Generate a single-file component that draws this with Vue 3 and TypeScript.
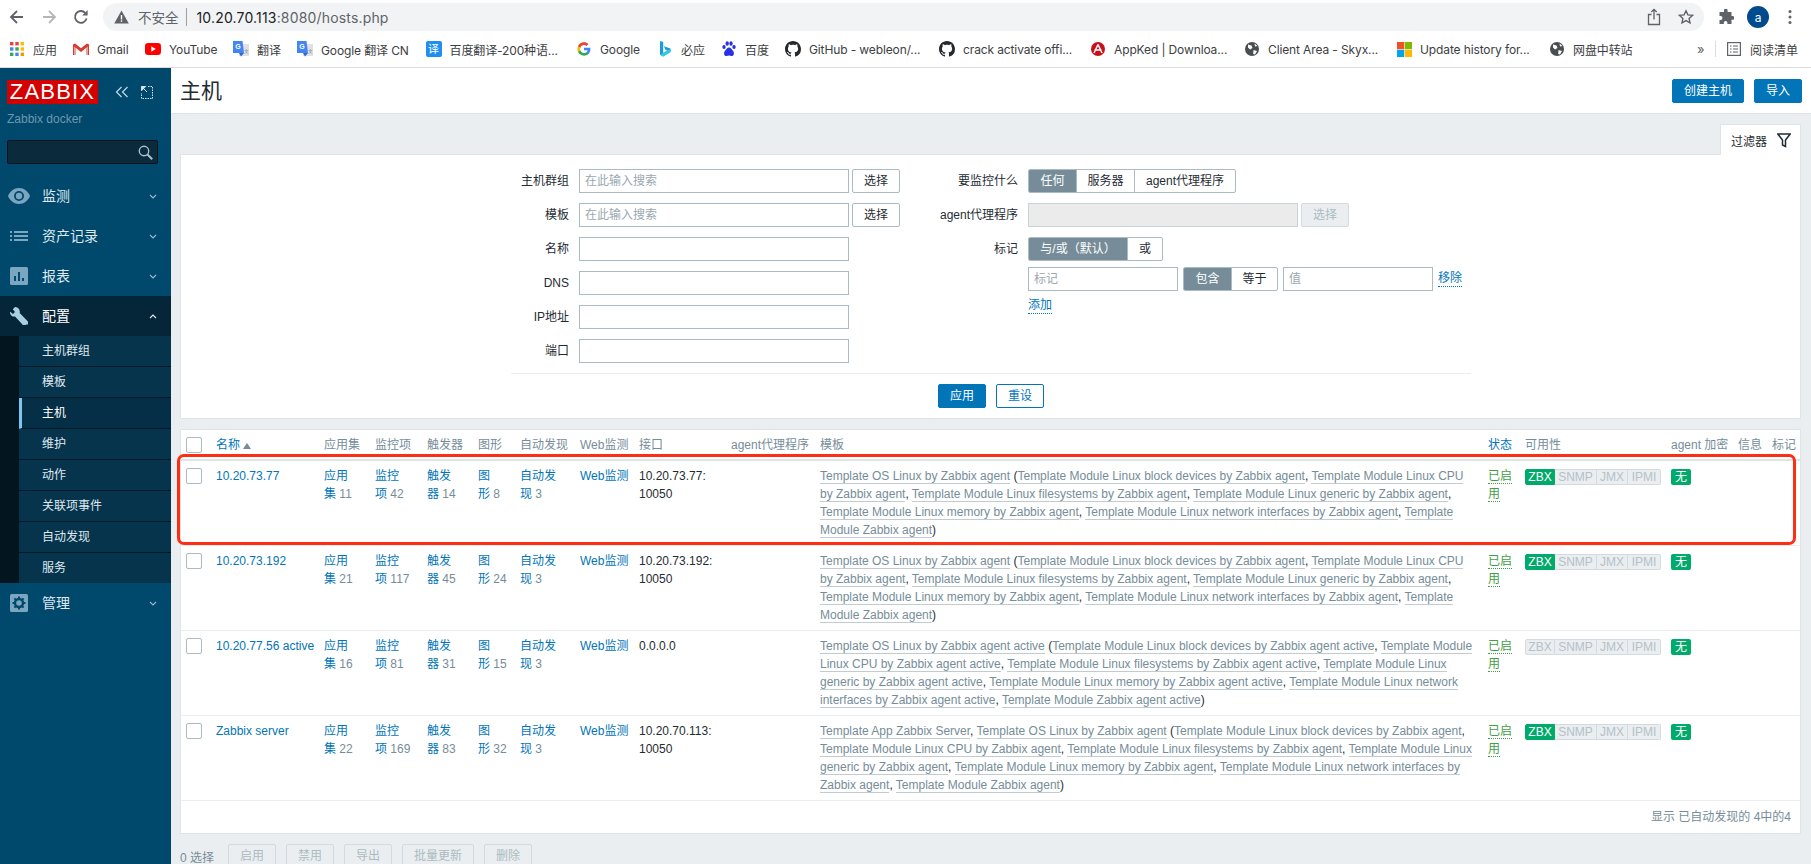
<script setup lang="ts">
interface Bookmark { kind: string; label: string; x: number }
const rawBookmarks: Bookmark[] = [
  { kind: 'apps', label: '应用', x: 9 },
  { kind: 'gmail', label: 'Gmail', x: 73 },
  { kind: 'youtube', label: 'YouTube', x: 145 },
  { kind: 'gt', label: '翻译', x: 233 },
  { kind: 'gt', label: 'Google 翻译 CN', x: 297 },
  { kind: 'bt', label: '百度翻译-200种语...', x: 425.5 },
  { kind: 'google', label: 'Google', x: 576 },
  { kind: 'bing', label: '必应', x: 657 },
  { kind: 'baidu', label: '百度', x: 721 },
  { kind: 'github', label: 'GitHub - webleon/...', x: 785 },
  { kind: 'github', label: 'crack activate offi...', x: 939 },
  { kind: 'appked', label: 'AppKed | Downloa...', x: 1090 },
  { kind: 'globe', label: 'Client Area - Skyx...', x: 1244 },
  { kind: 'ms', label: 'Update history for...', x: 1396 },
  { kind: 'globe', label: '网盘中转站', x: 1549 },
]
const bookmarks = rawBookmarks.map((b, i) => ({
  ...b,
  w: i < rawBookmarks.length - 1 ? rawBookmarks[i + 1].x - b.x : 100,
}))

const subItems = ['主机群组', '模板', '主机', '维护', '动作', '关联项事件', '自动发现', '服务']

const columns = [
  { label: '', w: 30 },
  { label: '名称', w: 108 },
  { label: '应用集', w: 51 },
  { label: '监控项', w: 52 },
  { label: '触发器', w: 51 },
  { label: '图形', w: 42 },
  { label: '自动发现', w: 60 },
  { label: 'Web监测', w: 59 },
  { label: '接口', w: 92 },
  { label: 'agent代理程序', w: 89 },
  { label: '模板', w: 668 },
  { label: '状态', w: 37 },
  { label: '可用性', w: 146 },
  { label: 'agent 加密', w: 67 },
  { label: '信息', w: 34 },
  { label: '标记', w: 33 },
]

const base = (suffix: string) => [
  `Template Module Linux block devices by Zabbix agent${suffix}`,
  `Template Module Linux CPU by Zabbix agent${suffix}`,
  `Template Module Linux filesystems by Zabbix agent${suffix}`,
  `Template Module Linux generic by Zabbix agent${suffix}`,
  `Template Module Linux memory by Zabbix agent${suffix}`,
  `Template Module Linux network interfaces by Zabbix agent${suffix}`,
  `Template Module Zabbix agent${suffix}`,
]

const rows = [
  { name: '10.20.73.77', a: 11, i: 42, t: 14, g: 8, d: 3, iface: '10.20.73.77: 10050', mains: ['Template OS Linux by Zabbix agent'], kids: base(''), zbx: true },
  { name: '10.20.73.192', a: 21, i: 117, t: 45, g: 24, d: 3, iface: '10.20.73.192: 10050', mains: ['Template OS Linux by Zabbix agent'], kids: base(''), zbx: true },
  { name: '10.20.77.56 active', a: 16, i: 81, t: 31, g: 15, d: 3, iface: '0.0.0.0', mains: ['Template OS Linux by Zabbix agent active'], kids: base(' active'), zbx: false },
  { name: 'Zabbix server', a: 22, i: 169, t: 83, g: 32, d: 3, iface: '10.20.70.113: 10050', mains: ['Template App Zabbix Server', 'Template OS Linux by Zabbix agent'], kids: base(''), zbx: true },
]
const actions = ['启用', '禁用', '导出', '批量更新', '删除']
const nbsp = '\u00a0'
</script>

<template>
  <div class="page">
    <header class="toolbar">
      <button class="tool-btn" aria-label="back">
        <svg width="16" height="16" viewBox="0 0 16 16" fill="none" stroke="#5f6368" stroke-width="1.8"><path d="M14 8H2.5M8 2 2 8l6 6" /></svg>
      </button>
      <button class="tool-btn" aria-label="forward">
        <svg width="16" height="16" viewBox="0 0 16 16" fill="none" stroke="#b4b7ba" stroke-width="1.8"><path d="M2 8h11.5M8 2l6 6-6 6" /></svg>
      </button>
      <button class="tool-btn" aria-label="reload">
        <svg width="16" height="16" viewBox="0 0 16 16" fill="none" stroke="#5f6368" stroke-width="1.8"><path d="M13.6 9.6A5.9 5.9 0 1 1 12.2 3.8" /><path d="M14.6 1v5.4H9.2z" fill="#5f6368" stroke="none" /></svg>
      </button>
      <div class="omnibox">
        <svg class="warn" width="15" height="14" viewBox="0 0 15 14"><path d="M7.5.5 14.8 13.5H.2z" fill="#5f6368" /><rect x="6.8" y="5" width="1.4" height="4.5" fill="#fff" /><rect x="6.8" y="10.3" width="1.4" height="1.5" fill="#fff" /></svg>
        <span class="insecure">不安全</span>
        <span class="omni-sep"></span>
        <span class="url"><span class="url-host">10.20.70.113</span>:8080/hosts.php</span>
        <button class="tool-btn end" aria-label="share">
          <svg width="14" height="18" viewBox="0 0 14 18" fill="none" stroke="#5f6368" stroke-width="1.3"><path d="M4.5 6.5H1.5v10h11v-10H9.500" /><path d="M7 11.500V1.500M4.300 4 7 1.300 9.700 4" /></svg>
        </button>
        <button class="tool-btn end" aria-label="star">
          <svg width="16" height="16" viewBox="0 0 16 16" fill="none" stroke="#5f6368" stroke-width="1.4"><path d="m8 1.800 1.900 4.100 4.500.5-3.300 3 .9 4.400L8 11.600l-4 2.200.9-4.400-3.300-3 4.500-.5z" /></svg>
        </button>
      </div>
      <button class="tool-btn first-ext" aria-label="extensions">
        <svg width="16" height="16" viewBox="0 0 16 16" fill="#5f6368"><path d="M6 1.500a1.800 1.800 0 0 1 3.600 0V3h3.900v3.900h1a1.900 1.900 0 0 1 0 3.800h-1v4.300H9.400v-1.200a1.800 1.800 0 0 0-3.600 0V15H1.500v-4.100h1.100a1.900 1.900 0 0 0 0-3.800H1.500V3H6z" /></svg>
      </button>
      <button class="tool-btn" aria-label="profile"><span class="avatar">a</span></button>
      <button class="tool-btn" aria-label="menu">
        <svg width="4" height="16" viewBox="0 0 4 16" fill="#5f6368"><circle cx="2" cy="2.500" r="1.500" /><circle cx="2" cy="8" r="1.500" /><circle cx="2" cy="13.500" r="1.500" /></svg>
      </button>
    </header>

    <div class="bookmarks">
      <div v-for="b in bookmarks" :key="b.label" class="bm" :style="{ width: b.w + 'px' }">
        <span class="bm-icon">
          <svg v-if="b.kind === 'apps'" width="14" height="14" viewBox="0 0 14 14">
            <rect x="0" y="0" width="3.400" height="3.400" fill="#ea4335" /><rect x="5.300" y="0" width="3.400" height="3.400" fill="#ea4335" /><rect x="10.600" y="0" width="3.400" height="3.400" fill="#fbbc04" />
            <rect x="0" y="5.300" width="3.400" height="3.400" fill="#4285f4" /><rect x="5.300" y="5.300" width="3.400" height="3.400" fill="#34a853" /><rect x="10.600" y="5.300" width="3.400" height="3.400" fill="#fbbc04" />
            <rect x="0" y="10.600" width="3.400" height="3.400" fill="#34a853" /><rect x="5.300" y="10.600" width="3.400" height="3.400" fill="#4285f4" /><rect x="10.600" y="10.600" width="3.400" height="3.400" fill="#f29900" />
          </svg>
          <svg v-else-if="b.kind === 'gmail'" width="16" height="13" viewBox="0 0 16 13">
            <path d="M0 1.500v10.500h3V5l5 4 5-4v7h3V1.500L14 .5 8 5.200 2 .5z" fill="#d93a2e" /><path d="M3 5v7H1V3.500z" fill="#e8a29c" /><path d="M13 5v7h2V3.500z" fill="#e8a29c" />
          </svg>
          <svg v-else-if="b.kind === 'youtube'" width="16" height="12" viewBox="0 0 16 12"><rect width="16" height="12" rx="3.200" fill="#f00" /><path d="m6.300 3.300 4.500 2.700-4.500 2.700z" fill="#fff" /></svg>
          <svg v-else-if="b.kind === 'gt'" width="16" height="16" viewBox="0 0 16 16">
            <rect x="6" y="3" width="10" height="12" fill="#dfe1e5" /><path d="M0 0h9.500l1.500 12H0z" fill="#4285f4" /><path d="M6 12h5l-3 3.500z" fill="#3367d6" /><text x="2.200" y="8" font-size="7" font-weight="700" fill="#fff" font-family="Liberation Sans">G</text><text x="10.500" y="12" font-size="5" fill="#777" font-family="Liberation Sans">文</text>
          </svg>
          <span v-else-if="b.kind === 'bt'" class="bt-icon">译</span>
          <svg v-else-if="b.kind === 'google'" width="14" height="14" viewBox="0 0 48 48">
            <path fill="#4285f4" d="M46 24.500c0-1.600-.1-3.100-.4-4.500H24v8.700h12.300c-.5 2.900-2.100 5.300-4.600 6.900v5.700h7.400C43.500 36.300 46 30.900 46 24.500z" />
            <path fill="#34a853" d="M24 47c6.200 0 11.400-2 15.100-5.500l-7.400-5.700c-2 1.400-4.600 2.200-7.700 2.200-6 0-11-4-12.800-9.400H3.600v5.900C7.300 41.800 15 47 24 47z" />
            <path fill="#fbbc04" d="M11.200 28.600c-.5-1.400-.7-2.900-.7-4.600s.3-3.200.7-4.600v-5.900H3.600C2.100 16.500 1 20.100 1 24s1.100 7.500 2.600 10.500z" />
            <path fill="#ea4335" d="M24 10c3.400 0 6.400 1.200 8.800 3.400l6.500-6.500C35.400 3.300 30.200 1 24 1 15 1 7.300 6.200 3.600 13.500l7.600 5.900C13 14 18 10 24 10z" />
          </svg>
          <svg v-else-if="b.kind === 'bing'" width="12" height="16" viewBox="0 0 12 16">
            <path d="M1 0l3.200 1.100v10.800l4.100-2.300-2-1L4.900 5.200l6.600 2.300v3.400L4.200 15.500 1 13.700z" fill="#1c9bd9" /><path d="m4.200 11.900 4.100-2.300 3.200-1.300v2.600l-7.300 4.600L1 13.700z" fill="#2fd0dc" />
          </svg>
          <svg v-else-if="b.kind === 'baidu'" width="14" height="16" viewBox="0 0 14 16" fill="#2932e1">
            <ellipse cx="2" cy="6" rx="1.700" ry="2" /><ellipse cx="5.200" cy="2.500" rx="1.700" ry="2.200" /><ellipse cx="9" cy="2.500" rx="1.700" ry="2.200" /><ellipse cx="12" cy="6" rx="1.700" ry="2" />
            <path d="M7 6.500c2 0 2.700 2 4 3.200 1.400 1.400 1.400 5.300-1.500 5.300-1 0-1.500-.4-2.500-.4s-1.500.4-2.500.4C1.600 15 1.600 11.100 3 9.700c1.300-1.200 2-3.200 4-3.200z" />
          </svg>
          <svg v-else-if="b.kind === 'github'" width="16" height="16" viewBox="0 0 16 16" fill="#24292e"><path d="M8 0C3.580 0 0 3.580 0 8c0 3.540 2.290 6.530 5.470 7.590.4.070.55-.17.55-.38 0-.19-.01-.82-.01-1.490-2.010.37-2.530-.49-2.690-.94-.09-.23-.48-.94-.82-1.130-.28-.15-.68-.52-.01-.53.63-.01 1.080.58 1.230.82.72 1.210 1.870.87 2.330.66.07-.52.28-.87.51-1.070-1.780-.2-3.640-.89-3.640-3.950 0-.87.31-1.590.82-2.150-.08-.2-.36-1.020.08-2.120 0 0 .67-.21 2.200.82.64-.18 1.320-.27 2-.27.68 0 1.360.09 2 .27 1.530-1.040 2.200-.82 2.200-.82.44 1.100.16 1.920.08 2.120.51.56.82 1.270.82 2.150 0 3.070-1.870 3.750-3.650 3.950.29.25.54.73.54 1.480 0 1.070-.01 1.930-.01 2.200 0 .21.15.46.55.38A8.013 8.013 0 0 0 16 8c0-4.420-3.580-8-8-8z" /></svg>
          <svg v-else-if="b.kind === 'appked'" width="14" height="14" viewBox="0 0 14 14"><circle cx="7" cy="7" r="7" fill="#c6101a" /><path d="M7 2.500 3 11M7 2.500l4 8.500M3.500 8h7" stroke="#fff" stroke-width="1.500" fill="none" /></svg>
          <svg v-else-if="b.kind === 'globe'" width="14" height="14" viewBox="0 0 14 14"><circle cx="7" cy="7" r="7" fill="#4a4d52" /><path d="M3 2.500 6.500 3.500 7.500 6 5 7.500 3 5.500zM8.500 8l3.500 1-2 3.500-1.800-.5zM9.500 1.500l3 2.500-2.500.5z" fill="#fff" /></svg>
          <svg v-else-if="b.kind === 'ms'" width="15" height="15" viewBox="0 0 15 15"><rect width="7.200" height="7.200" fill="#f25022" /><rect x="7.800" width="7.200" height="7.200" fill="#7fba00" /><rect y="7.800" width="7.200" height="7.200" fill="#00a4ef" /><rect x="7.800" y="7.800" width="7.200" height="7.200" fill="#ffb900" /></svg>
        </span>
        <span class="bm-label">{{ b.label }}</span>
      </div>
      <div class="bm-end">
        <span class="more">»</span>
        <span class="bm-sep"></span>
        <svg width="14" height="14" viewBox="0 0 14 14" fill="none" stroke="#5f6368" stroke-width="1.200"><rect x=".6" y=".6" width="12.800" height="12.800" /><path d="M3 4h1.500M6 4h5M3 7h1.500M6 7h5M3 10h1.500M6 10h5" /></svg>
        <span class="bm-label reading">阅读清单</span>
      </div>
    </div>

    <div class="app">
      <aside class="sidebar">
        <div class="brand">
          <span class="logo">ZABBIX</span>
          <svg class="collapse" width="14" height="12" viewBox="0 0 14 12" fill="none" stroke="#c5d8e3" stroke-width="1.200"><path d="M6.500 1 1.500 6l5 5M12.500 1l-5 5 5 5" /></svg>
          <svg class="kiosk" width="12" height="13" viewBox="0 0 12 13" fill="none" stroke="#d5e2ea" stroke-width="1" stroke-dasharray="1.500 1"><path d="M7 .5h4.500v12H.5V7" /><path d="M.5.500 6 6M.5.500h4.200L.5 4.700z" fill="#d5e2ea" stroke-dasharray="none" /></svg>
        </div>
        <div class="server">Zabbix docker</div>
        <div class="search">
          <svg width="15" height="15" viewBox="0 0 15 15" fill="none" stroke="#a8c2d0" stroke-width="1.400"><circle cx="6" cy="6" r="4.700" /><path d="m9.500 9.500 4.700 4.700" stroke-width="2" /></svg>
        </div>
        <nav class="menu">
          <div class="menu-item">
            <svg class="m-icon" width="22" height="16" viewBox="0 0 22 16"><path d="M11 0c5 0 9 3.500 11 8-2 4.500-6 8-11 8S2 12.500 0 8c2-4.500 6-8 11-8z" fill="#7aa7bf" /><circle cx="11" cy="8" r="5" fill="#00486c" /><circle cx="11" cy="8" r="3.200" fill="#7aa7bf" /></svg>
            <span>监测</span>
            <svg class="chev" width="8" height="5" viewBox="0 0 8 5" fill="none" stroke="#9db9c8" stroke-width="1.100"><path d="m1 1 3 3 3-3" /></svg>
          </div>
          <div class="menu-item">
            <svg class="m-icon" width="18" height="10" viewBox="0 0 18 10" fill="#7aa7bf"><rect y="0" width="2" height="2" /><rect y="4" width="2" height="2" /><rect y="8" width="2" height="2" /><rect x="4" y="0" width="14" height="2" /><rect x="4" y="4" width="14" height="2" /><rect x="4" y="8" width="14" height="2" /></svg>
            <span>资产记录</span>
            <svg class="chev" width="8" height="5" viewBox="0 0 8 5" fill="none" stroke="#9db9c8" stroke-width="1.100"><path d="m1 1 3 3 3-3" /></svg>
          </div>
          <div class="menu-item">
            <svg class="m-icon" width="18" height="18" viewBox="0 0 18 18"><rect width="18" height="18" rx="1.500" fill="#7aa7bf" /><rect x="4" y="9" width="2" height="5" fill="#00486c" /><rect x="8" y="5" width="2" height="9" fill="#00486c" /><rect x="12" y="11" width="2" height="3" fill="#00486c" /></svg>
            <span>报表</span>
            <svg class="chev" width="8" height="5" viewBox="0 0 8 5" fill="none" stroke="#9db9c8" stroke-width="1.100"><path d="m1 1 3 3 3-3" /></svg>
          </div>
          <div class="menu-item open">
            <svg class="m-icon" width="18" height="18" viewBox="0 0 18 18"><path d="M5 0 2.800 2.200 5 5l-2 2-2.800-2.300L0 5c-.2 2.800 2.300 5 5 4.500l7.500 8a1.700 1.700 0 0 0 3.400-.2 1.700 1.700 0 0 0 2-2.800L9.700 6C10.500 2.800 7.900-.2 5 0z" fill="#a9cfe3" /></svg>
            <span>配置</span>
            <svg class="chev" width="8" height="5" viewBox="0 0 8 5" fill="none" stroke="#dfe9ef" stroke-width="1.100"><path d="m1 4 3-3 3 3" /></svg>
          </div>
          <div class="sub">
            <div v-for="s in subItems" :key="s" class="sub-item" :class="{ active: s === '主机' }">{{ s }}</div>
          </div>
          <div class="menu-item">
            <svg class="m-icon" width="18" height="18" viewBox="0 0 18 18"><rect width="18" height="18" rx="1.500" fill="#7aa7bf" /><circle cx="9" cy="9" r="4" fill="none" stroke="#00486c" stroke-width="2.400" /><path d="M9 2.500v2.500M9 13v2.500M2.500 9H5M13 9h2.500M4.400 4.400l1.800 1.800M11.800 11.800l1.800 1.800M13.600 4.400l-1.800 1.800M6.200 11.800l-1.800 1.800" stroke="#00486c" stroke-width="2" /></svg>
            <span>管理</span>
            <svg class="chev" width="8" height="5" viewBox="0 0 8 5" fill="none" stroke="#9db9c8" stroke-width="1.100"><path d="m1 1 3 3 3-3" /></svg>
          </div>
        </nav>
      </aside>

      <main class="content">
        <div class="titlebar">
          <h1>主机</h1>
          <div class="title-actions">
            <button class="btn primary wide">创建主机</button>
            <button class="btn primary">导入</button>
          </div>
        </div>

        <div class="wrap">
          <div class="tab-row">
            <div class="filter-tab">
              <span>过滤器</span>
              <svg width="14" height="15" viewBox="0 0 14 15" fill="none" stroke="#1f2c33" stroke-width="1.500"><path d="M.8 1h12.400L8.500 7v6.500L5.500 12V7z" /></svg>
            </div>
          </div>

          <section class="filter">
            <div class="filter-cols">
              <div class="form left">
                <label>主机群组</label>
                <div class="ctl"><input class="field w270" placeholder="在此输入搜索" /><button class="btn plain">选择</button></div>
                <label>模板</label>
                <div class="ctl"><input class="field w270" placeholder="在此输入搜索" /><button class="btn plain">选择</button></div>
                <label>名称</label>
                <div class="ctl"><input class="field w270" /></div>
                <label>DNS</label>
                <div class="ctl"><input class="field w270" /></div>
                <label>IP地址</label>
                <div class="ctl"><input class="field w270" /></div>
                <label>端口</label>
                <div class="ctl"><input class="field w270" /></div>
              </div>
              <div class="form right">
                <label>要监控什么</label>
                <div class="ctl">
                  <div class="seg"><span class="on s48">任何</span><span class="s58">服务器</span><span class="s102">agent代理程序</span></div>
                </div>
                <label>agent代理程序</label>
                <div class="ctl"><input class="field dis w270b" disabled /><button class="btn plain disabled">选择</button></div>
                <label>标记</label>
                <div class="stack">
                  <div class="seg"><span class="on s99">与/或（默认）</span><span class="s35">或</span></div>
                  <div class="tag-row">
                    <input class="field w150" placeholder="标记" />
                    <div class="seg"><span class="on s48">包含</span><span class="s46">等于</span></div>
                    <input class="field w150" placeholder="值" />
                    <a class="dotted">移除</a>
                  </div>
                  <div class="add"><a class="dotted">添加</a></div>
                </div>
              </div>
            </div>
            <div class="filter-actions">
              <button class="btn primary">应用</button>
              <button class="btn outline">重设</button>
            </div>
          </section>

          <section class="list">
            <table>
              <colgroup>
                <col v-for="c in columns" :key="c.label" :style="{ width: c.w + 'px' }" />
              </colgroup>
              <thead>
                <tr>
                  <th><span class="cb"></span></th>
                  <th class="link-head">名称<span class="sort"></span></th>
                  <th>应用集</th>
                  <th>监控项</th>
                  <th>触发器</th>
                  <th>图形</th>
                  <th>自动发现</th>
                  <th>Web监测</th>
                  <th>接口</th>
                  <th>agent代理程序</th>
                  <th>模板</th>
                  <th class="link-head">状态</th>
                  <th>可用性</th>
                  <th>agent 加密</th>
                  <th>信息</th>
                  <th>标记</th>
                </tr>
              </thead>
              <tbody>
                <tr v-for="r in rows" :key="r.name">
                  <td><span class="cb"></span></td>
                  <td class="name"><a>{{ r.name }}</a></td>
                  <td><a>应用集</a>{{ nbsp }}<span class="count">{{ r.a }}</span></td>
                  <td><a>监控项</a>{{ nbsp }}<span class="count">{{ r.i }}</span></td>
                  <td><a>触发器</a>{{ nbsp }}<span class="count">{{ r.t }}</span></td>
                  <td><a>图形</a>{{ nbsp }}<span class="count">{{ r.g }}</span></td>
                  <td><a>自动发现</a>{{ nbsp }}<span class="count">{{ r.d }}</span></td>
                  <td><a>Web监测</a></td>
                  <td class="dark">{{ r.iface }}</td>
                  <td></td>
                  <td class="tpl">
                    <template v-for="(m, i) in r.mains" :key="m"><span class="ul">{{ m }}</span><template v-if="i < r.mains.length - 1">{{ ', ' }}</template></template>{{ ' (' }}<template v-for="(k, j) in r.kids" :key="k"><span class="ul">{{ k }}</span><template v-if="j < r.kids.length - 1">{{ ', ' }}</template></template>)
                  </td>
                  <td><a class="status">已启用</a></td>
                  <td>
                    <div class="avail">
                      <span :class="r.zbx ? 'ok' : ''" class="z">ZBX</span><span class="sn">SNMP</span><span class="jm">JMX</span><span class="ip">IPMI</span>
                    </div>
                  </td>
                  <td><span class="none">无</span></td>
                  <td></td>
                  <td></td>
                </tr>
              </tbody>
            </table>
            <div class="table-foot">显示 已自动发现的 4中的4</div>
          </section>

          <div class="bulk">
            <span class="sel">0 选择</span>
            <button v-for="a in actions" :key="a" class="btn plain disabled bulk-btn">{{ a }}</button>
          </div>

          <div class="annotation"></div>
        </div>
      </main>
    </div>
  </div>
</template>

<style scoped>
* { box-sizing: border-box; }
button { font-family: inherit; margin: 0; }
.page {
  width: 1811px;
  height: 864px;
  overflow: hidden;
  display: flex;
  flex-direction: column;
  background: #fff;
  font-family: "Liberation Sans", "Noto Sans CJK SC", sans-serif;
  font-size: 12px;
  color: #1f2c33;
}

/* browser chrome */
.toolbar {
  height: 31px;
  flex: none;
  display: flex;
  align-items: flex-start;
  padding: 3px 0 0 1px;
  font-family: Inter, "Noto Sans CJK SC", sans-serif;
}
.tool-btn {
  width: 32px;
  height: 28px;
  flex: none;
  border: 0;
  padding: 0;
  background: transparent;
  display: flex;
  align-items: center;
  justify-content: center;
}
.omnibox {
  margin-left: 6px;
  width: 1601px;
  height: 28px;
  flex: none;
  border-radius: 14px;
  background: #f1f3f4;
  display: flex;
  align-items: center;
  padding-left: 11px;
  padding-right: 2px;
}
.warn { flex: none; }
.insecure { margin-left: 9px; font-size: 13.5px; color: #5f6368; white-space: nowrap; }
.omni-sep { width: 1px; height: 18px; margin: 0 10px 0 7px; background: #9aa0a6; }
.url { font-size: 14px; letter-spacing: 0.17px; color: #5f6368; flex: 1; white-space: nowrap; }
.url-host { color: #202124; }
.first-ext { margin-left: 6px; }
.avatar {
  width: 22px;
  height: 22px;
  border-radius: 50%;
  background: #004b8d;
  color: #fff;
  font-size: 12px;
  display: flex;
  align-items: center;
  justify-content: center;
}
.bookmarks {
  height: 37px;
  flex: none;
  border-bottom: 1px solid #dadce0;
  display: flex;
  align-items: center;
  padding: 0 13px 0 9px;
  font-family: Inter, "Noto Sans CJK SC", sans-serif;
}
.bm { display: flex; align-items: center; flex: none; white-space: nowrap; }
.bm-icon {
  width: 16px;
  height: 16px;
  display: flex;
  align-items: center;
  justify-content: center;
  flex: none;
  margin-right: 8px;
}
.bm-label { font-size: 12px; letter-spacing: -0.12px; color: #3c4043; }
.bt-icon {
  width: 16px;
  height: 16px;
  border-radius: 2px;
  background: #1f8ef1;
  color: #fff;
  font-size: 11px;
  line-height: 16px;
  text-align: center;
}
.bm-end { margin-left: auto; display: flex; align-items: center; }
.more { color: #5f6368; font-size: 13px; width: 8px; }
.bm-sep { width: 1px; height: 16px; background: #dadce0; margin: 0 11px 0 10px; }
.reading { margin-left: 9px; letter-spacing: 0; }

/* app shell */
.app { flex: 1; min-height: 0; display: flex; }
.sidebar {
  width: 171px;
  flex: none;
  background: #00486c;
  color: #fff;
}
.brand {
  height: 24px;
  margin: 12px 0 0 7px;
  display: flex;
  align-items: center;
}
.logo {
  width: 91px;
  height: 24px;
  background: #d40000;
  color: #fff;
  font-size: 22px;
  line-height: 24px;
  text-align: center;
  letter-spacing: 1.2px;
}
.collapse { margin-left: 17px; }
.kiosk { margin-left: 12px; }
.server {
  margin: 7px 0 0 7px;
  height: 16px;
  line-height: 16px;
  color: #6b98af;
}
.search {
  width: 151px;
  height: 24px;
  margin: 13px 0 0 7px;
  background: #0b2a3c;
  border: 1px solid #04141d;
  border-radius: 2px;
  display: flex;
  align-items: center;
  justify-content: flex-end;
  padding-right: 4px;
}
.menu { margin-top: 12px; }
.menu-item {
  height: 40px;
  display: flex;
  align-items: center;
  position: relative;
  padding: 0 0 2px 42px;
  font-size: 14px;
  color: #dfe9ef;
}
.menu-item.open { background: #052638; color: #fff; }
.m-icon { position: absolute; left: 10px; top: 50%; transform: translateY(-50%); }
.menu-item:first-child .m-icon { left: 8px; }
.chev { position: absolute; left: 149px; top: 18px; }
.sub { background: #03161f; padding-left: 19px; }
.sub-item {
  height: 31px;
  line-height: 30px;
  padding-left: 23px;
  background: #07344d;
  border-bottom: 1px solid #021a27;
  color: #dfe9ef;
}
.sub-item:last-child { height: 30px; border-bottom: 0; }
.sub-item.active {
  background: #052f47;
  border-left: 3px solid #7cc5f0;
  padding-left: 20px;
  color: #fff;
}

.content { flex: 1; min-width: 0; background: #ebeef0; display: flex; flex-direction: column; }
.titlebar {
  height: 46px;
  flex: none;
  background: #fff;
  border-bottom: 1px solid #dfe4e7;
  display: flex;
  align-items: center;
  justify-content: space-between;
  padding: 0 9px 0 9px;
}
h1 { margin: 0; font-size: 21px; font-weight: 400; color: #1f2c33; line-height: 28px; }
.title-actions { display: flex; gap: 10px; margin-top: 1px; }

.btn {
  height: 24px;
  width: 48px;
  padding: 0;
  border-radius: 2px;
  font-size: 12px;
  line-height: 22px;
  text-align: center;
  border: 1px solid #acbbc2;
  background: #fff;
  color: #1f2c33;
}
.btn.primary { background: #0275b8; border-color: #0275b8; color: #fff; }
.btn.wide { width: 72px; }
.btn.outline { border-color: #0275b8; color: #0275b8; }
.btn.plain { margin-left: 3px; }
.btn.disabled { background: #ebeef0; border-color: #d3dbdf; color: #acbbc2; }

.wrap { position: relative; flex: 1; min-height: 0; padding: 10px 10px 0 9px; }
.tab-row { display: flex; justify-content: flex-end; height: 30px; }
.filter-tab {
  width: 81px;
  height: 31px;
  background: #fff;
  border: 1px solid #dfe4e7;
  border-bottom: 0;
  display: flex;
  align-items: center;
  gap: 10px;
  padding-left: 10px;
  position: relative;
  z-index: 1;
}
.filter {
  height: 265px;
  background: #fff;
  border: 1px solid #dfe4e7;
  padding-top: 14px;
}
.filter-cols {
  width: 960px;
  margin-left: 330px;
  height: 205px;
  border-bottom: 1px solid #ebeef0;
  display: grid;
  grid-template-columns: 415px 545px;
}
.form { display: grid; row-gap: 10px; column-gap: 10px; align-content: start; align-items: start; }
.form.left { grid-template-columns: 58px 1fr; }
.form.right { grid-template-columns: 92px 1fr; }
.form label { height: 24px; line-height: 24px; text-align: right; white-space: nowrap; }
.ctl { display: flex; height: 24px; }
.field {
  height: 24px;
  padding: 0 5px;
  border: 1px solid #acbbc2;
  border-radius: 0;
  background: #fff;
  font-family: inherit;
  font-size: 12px;
  outline: none;
  display: block;
  margin: 0;
}
.field::placeholder { color: #9aa8b0; opacity: 1; }
.w270 { width: 270px; }
.w270b { width: 270px; }
.w150 { width: 150px; }
.field.dis { background: #ebebeb; border-color: #c9d3d8; }
.seg {
  display: inline-flex;
  height: 24px;
  border: 1px solid #acbbc2;
  border-radius: 2px;
  overflow: hidden;
  flex: none;
}
.seg span {
  display: block;
  line-height: 22px;
  text-align: center;
  white-space: nowrap;
  border-left: 1px solid #acbbc2;
  margin-left: 0;
}
.seg span:first-child { border-left: 0; }
.seg .on { background: #768d99; color: #fff; }
.s48 { width: 47px; }
.s58 { width: 58px; }
.s102 { width: 101px; }
.s99 { width: 98px; }
.s35 { width: 35px; }
.s46 { width: 46px; }
.stack { display: flex; flex-direction: column; align-items: flex-start; }
.tag-row { display: flex; align-items: flex-start; gap: 5px; margin-top: 6px; height: 24px; }
.dotted {
  color: #0275b8;
  border-bottom: 1px dotted #0275b8;
  line-height: 16px;
  display: inline-block;
  margin-top: 3px;
}
.add { margin-top: 3px; }
.filter-actions { display: flex; gap: 10px; justify-content: flex-start; padding: 10px 0 0 757px; }

.list {
  margin-top: 10px;
  background: #fff;
  border: 1px solid #dfe4e7;
  height: 405px;
}
table { border-collapse: collapse; table-layout: fixed; width: 1619px; }
th {
  height: 30px;
  padding: 0 5px;
  text-align: left;
  font-weight: 400;
  color: #768d99;
  white-space: nowrap;
  border-bottom: 2px solid #dfe4e7;
  line-height: 14px;
  vertical-align: middle;
}
.link-head { color: #0275b8; }
.sort {
  display: inline-block;
  margin-left: 3px;
  border-left: 4px solid transparent;
  border-right: 4px solid transparent;
  border-bottom: 6px solid #768d99;
}
td {
  padding: 6px 5px;
  vertical-align: top;
  line-height: 18px;
  border-bottom: 1px solid #ebeef0;
  color: #0275b8;
}
td.name { white-space: nowrap; }
td.dark { color: #1f2c33; }
td a { color: #0275b8; }
.count { color: #768d99; }
.cb {
  display: block;
  width: 16px;
  height: 16px;
  border: 1px solid #acbbc2;
  border-radius: 2px;
  background: #fff;
  margin-top: 1px;
}
th .cb { margin-top: 0; }
td.tpl { color: #1f2c33; }
.ul { color: #768d99; border-bottom: 1px solid rgba(118, 141, 153, 0.45); }
td a.status { color: #429e47; border-bottom: 1px dotted #429e47; }
.avail { display: flex; height: 16px; margin-top: 2px; line-height: 14px; }
.avail span {
  height: 16px;
  background: #ebeef0;
  color: #b4c1c8;
  border: 1px solid #d3dbdf;
  border-left: 0;
  text-align: center;
}
.avail .z { width: 30px; border-left: 1px solid #d3dbdf; border-radius: 2px 0 0 2px; }
.avail .z.ok { background: #00aa6b; border-color: #00aa6b; color: #fff; }
.avail .sn { width: 42px; }
.avail .jm { width: 31px; }
.avail .ip { width: 33px; border-radius: 0 2px 2px 0; }
.none {
  display: block;
  width: 20px;
  height: 16px;
  margin-top: 2px;
  background: #00aa6b;
  color: #fff;
  border-radius: 2px;
  text-align: center;
  line-height: 16px;
}
.table-foot { height: 33px; line-height: 33px; text-align: right; padding-right: 9px; color: #768d99; }
.bulk { display: flex; align-items: center; margin-top: 10px; height: 24px; }
.sel { width: 48px; color: #768d99; }
.btn.bulk-btn { width: auto; min-width: 48px; padding: 0 11px; margin: 0 10px 0 0; flex: none; }
.annotation {
  position: absolute;
  left: 6px;
  top: 340px;
  width: 1619px;
  height: 91px;
  border: 3px solid #ff2d13;
  border-radius: 7px;
  pointer-events: none;
}
</style>

<style>
html, body { margin: 0; overflow: hidden; background: #fff; }
</style>
